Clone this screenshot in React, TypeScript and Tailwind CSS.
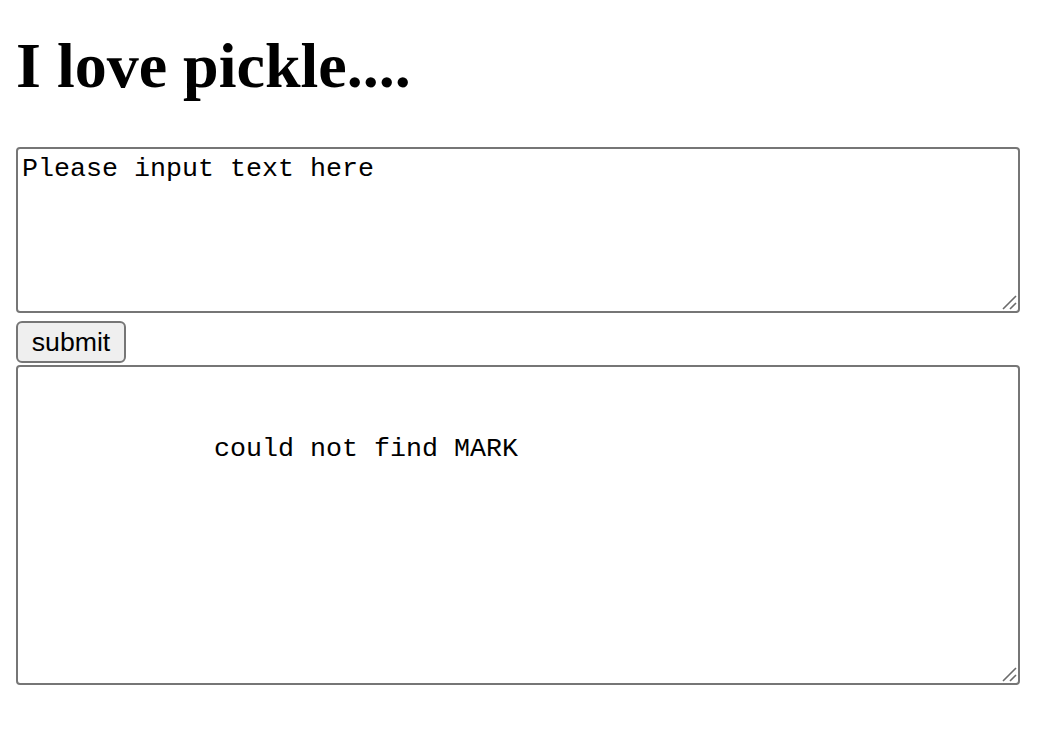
function Grip() {
  return (
    <svg
      className="pointer-events-none absolute right-[3px] bottom-[3px] h-[16px] w-[16px]"
      viewBox="0 0 16 16"
      aria-hidden="true"
    >
      <path d="M2 15 L15 2 M9 15 L15 9" stroke="#6b6b6b" strokeWidth={1.6} fill="none" />
    </svg>
  );
}

export default function App() {
  return (
    <div className="min-h-screen bg-white px-4 text-black">
      <h1 className="pt-[29px] text-[64px] leading-[74px] font-bold font-['Liberation_Serif',serif]">
        I love pickle....
      </h1>
      <div className="mt-[44px] flex flex-col items-start">
        <div className="relative">
          <textarea
            className="block h-[166px] w-[1004px] resize-none rounded-[4px] border-2 border-[#767676] bg-white px-1 pt-[5px] pb-1 text-[26.67px] leading-[31px] font-['Liberation_Mono',monospace] text-black outline-none"
            defaultValue="Please input text here"
          />
          <Grip />
        </div>
        <button className="mt-[8px] h-[42px] w-[110px] rounded-[6px] border-2 border-[#767676] bg-[#efefef] px-3 text-[26.67px] leading-[30px] font-['Liberation_Sans',sans-serif] text-black">
          submit
        </button>
        <div className="relative mt-[2px]">
          <textarea
            className="block h-[320px] w-[1004px] resize-none rounded-[4px] border-2 border-[#767676] bg-white px-1 pt-[5px] pb-1 text-[26.67px] leading-[31px] font-['Liberation_Mono',monospace] text-black outline-none"
            readOnly
            defaultValue={"\n\n            could not find MARK"}
          />
          <Grip />
        </div>
      </div>
    </div>
  );
}
